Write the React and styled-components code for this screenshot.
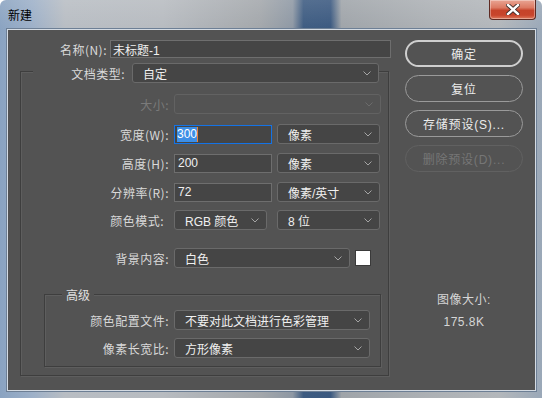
import React from 'react';
import styled, { createGlobalStyle } from 'styled-components';

const GlobalStyle = createGlobalStyle`
  html, body {
    margin: 0;
    padding: 0;
    width: 542px;
    height: 398px;
    overflow: hidden;
  }
  body {
    font-family: "Liberation Sans", "Noto Sans CJK SC", sans-serif;
    font-size: 12px;
  }
`;

const Frame = styled.div`
  width: 542px;
  height: 398px;
  box-sizing: border-box;
  display: flex;
  flex-direction: column;
  padding: 0 6px 7px 7px;
  background:
    linear-gradient(180deg, rgba(255,255,255,0.12) 0%, rgba(255,255,255,0) 30px),
    linear-gradient(90deg, #8aa3c1 0%, #9db0c8 6%, #b8bdc3 12%, #b7bbc0 30%, #a3a7ab 48%, #8e98a4 54%, #3d5b81 56%, #3b5980 61%, #9fa4a9 63%, #adb1b5 80%, #b3b7bb 92%, #9aa8b8 100%);
  border-radius: 6px 6px 0 0;
`;

const TitleBar = styled.div`
  height: 29px;
  display: flex;
  justify-content: space-between;
  align-items: flex-start;
  flex-shrink: 0;
`;

const Title = styled.div`
  margin-top: 8px;
  margin-left: 1px;
  color: #000;
  font-family: "Noto Sans CJK SC", sans-serif;
  font-size: 12px;
  line-height: 14px;
`;

const CloseButton = styled.div`
  width: 47px;
  height: 20px;
  margin-right: 0;
  box-sizing: border-box;
  border: 1px solid #5e2a22;
  border-top: none;
  border-radius: 0 0 4px 4px;
  background: linear-gradient(180deg, #e9a493 0%, #dc7a63 40%, #c6432a 55%, #c8452c 80%, #de7a5e 100%);
  box-shadow: inset 0 0 0 1px rgba(255,255,255,0.35);
  display: flex;
  align-items: center;
  justify-content: center;
`;

const Client = styled.div`
  flex: 1;
  display: flex;
  background: #535353;
  border: 1px solid #d4dbe3;
  box-shadow: 0 0 0 1px #6d7f95;
`;

const LeftPanel = styled.div`
  width: 388px;
  display: flex;
  flex-direction: column;
`;

const RightPanel = styled.div`
  width: 118px;
  margin-left: 9px;
  padding-top: 10px;
  display: flex;
  flex-direction: column;
  gap: 8px;
`;

const Row = styled.div`
  display: flex;
  align-items: center;
  gap: ${p => p.$gap ?? 5}px;
  margin-top: ${p => p.$top ?? 0}px;
  height: 20px;
`;

const Label = styled.div`
  width: ${p => p.$w}px;
  flex-shrink: 0;
  text-align: right;
  color: ${p => (p.$disabled ? '#7a7a7a' : '#d9d9d9')};
  font-family: "Noto Sans CJK SC", sans-serif;
  font-size: 12px;
  white-space: nowrap;
  letter-spacing: 0.5px;
`;

const Input = styled.div`
  width: ${p => p.$w}px;
  height: ${p => p.$h ?? 19}px;
  box-sizing: border-box;
  background: #454545;
  border: 1px solid ${p => (p.$focus ? '#1473e6' : '#6e6e6e')};
  color: #f0f0f0;
  padding-left: ${p => p.$pad ?? 2}px;
  display: flex;
  align-items: center;
  font-size: 12px;
  font-family: "Liberation Sans", "Noto Sans CJK SC", sans-serif;
  white-space: nowrap;
`;

const Selected = styled.span`
  background: #3d8fe6;
  color: #fff;
  line-height: 15px;
`;

const Caret = styled.span`
  width: 1px;
  height: 15px;
  background: #e8843a;
`;

const Select = styled.div`
  width: ${p => p.$w}px;
  height: 20px;
  box-sizing: border-box;
  border-radius: 3px;
  background: ${p => (p.$disabled ? '#535353' : '#454545')};
  border: 1px solid ${p => (p.$disabled ? '#626262' : '#6a6a6a')};
  color: #f0f0f0;
  padding: 0 7px 0 ${p => p.$pad ?? 10}px;
  display: flex;
  align-items: center;
  justify-content: space-between;
  font-family: "Liberation Sans", "Noto Sans CJK SC", sans-serif;
  font-size: 12px;
  white-space: nowrap;
`;

const Group = styled.div`
  margin-left: 12px;
  margin-top: 12px;
  width: 369px;
  box-sizing: border-box;
  border: 1px solid #3e3e3e;
  box-shadow: 1px 1px 0 #5e5e5e inset, 1px 1px 0 #5e5e5e;
  display: flex;
  flex-direction: column;
  padding-bottom: 8px;
`;

const LegendRow = styled(Row)`
  margin-top: -9px;
  margin-left: 12px;
  width: 346px;
  background: #535353;
`;

const SubGroup = styled.div`
  margin-left: 23px;
  margin-top: 26px;
  width: 337px;
  box-sizing: border-box;
  border: 1px solid #3e3e3e;
  box-shadow: 1px 1px 0 #5e5e5e inset, 1px 1px 0 #5e5e5e;
  padding-bottom: 8px;
  display: flex;
  flex-direction: column;
`;

const SubLegend = styled.div`
  margin: -8px 0 0 17px;
  padding: 0 4px;
  width: fit-content;
  background: #535353;
  color: #e0e0e0;
  font-family: "Noto Sans CJK SC", sans-serif;
  font-size: 12px;
  line-height: 16px;
`;

const Swatch = styled.div`
  width: 16px;
  height: 16px;
  box-sizing: border-box;
  background: #fff;
  border: 1px solid #3a3a3a;
`;

const Button = styled.div`
  height: 27px;
  box-sizing: border-box;
  border-radius: 14px;
  border: ${p => (p.$primary ? '2px solid #cfcfcf' : `1px solid ${p.$disabled ? '#616161' : '#9a9a9a'}`)};
  color: ${p => (p.$disabled ? '#767676' : '#ececec')};
  display: flex;
  align-items: center;
  justify-content: center;
  font-family: "Liberation Sans", "Noto Sans CJK SC", sans-serif;
  font-size: 12px;
  letter-spacing: 0.8px;
`;

const SizeInfo = styled.div`
  margin-top: 110px;
  display: flex;
  flex-direction: column;
  align-items: center;
  gap: 8px;
  color: #d6d6d6;
  font-family: "Liberation Sans", "Noto Sans CJK SC", sans-serif;
  font-size: 12px;
  letter-spacing: 0.5px;
`;

const Chevron = ({ dim }) => (
  <svg width="8" height="5" viewBox="0 0 8 5">
    <polyline points="0.5,0.5 4,4 7.5,0.5" fill="none" stroke={dim ? '#6e6e6e' : '#b0b0b0'} strokeWidth="0.9" />
  </svg>
);

const CloseGlyph = () => (
  <svg width="14" height="11" viewBox="0 0 14 11">
    <path d="M2 1 L12 10 M12 1 L2 10" stroke="#3a2a28" strokeWidth="4.2" strokeLinecap="square" />
    <path d="M2 1 L12 10 M12 1 L2 10" stroke="#fff" strokeWidth="2.4" strokeLinecap="square" />
  </svg>
);

const Dropdown = ({ w, children, pad, disabled }) => (
  <Select $w={w} $pad={pad} $disabled={disabled}>
    <span>{children}</span>
    <Chevron dim={disabled} />
  </Select>
);

export default function App() {
  return (
    <>
      <GlobalStyle />
      <Frame>
        <TitleBar>
          <Title>新建</Title>
          <CloseButton><CloseGlyph /></CloseButton>
        </TitleBar>
        <Client>
          <LeftPanel>
            <Row $top={9} $gap={3}>
              <Label $w={99}>名称(N):</Label>
              <Input $w={281} $h={18}>未标题-1</Input>
            </Row>
            <Group>
              <LegendRow $gap={7}>
                <Label $w={92}>文档类型:</Label>
                <Dropdown w={247} pad={10}>自定</Dropdown>
              </LegendRow>
              <Row $top={11}>
                <Label $w={148} $disabled>大小:</Label>
                <Dropdown w={207} disabled></Dropdown>
              </Row>
              <Row $top={10}>
                <Label $w={148}>宽度(W):</Label>
                <Input $w={98} $focus $pad={2}><Selected>300</Selected><Caret /></Input>
                <Dropdown w={103}>像素</Dropdown>
              </Row>
              <Row $top={9}>
                <Label $w={148}>高度(H):</Label>
                <Input $w={98} $pad={3}>200</Input>
                <Dropdown w={103}>像素</Dropdown>
              </Row>
              <Row $top={9}>
                <Label $w={148}>分辨率(R):</Label>
                <Input $w={98} $pad={3}>72</Input>
                <Dropdown w={103}>像素/英寸</Dropdown>
              </Row>
              <Row $top={8} $gap={10}>
                <Label $w={143}>颜色模式:</Label>
                <Dropdown w={93}>RGB 颜色</Dropdown>
                <Dropdown w={103}>8 位</Dropdown>
              </Row>
              <Row $top={18}>
                <Label $w={148}>背景内容:</Label>
                <Dropdown w={176}>白色</Dropdown>
                <Swatch />
              </Row>
              <SubGroup>
                <SubLegend>高级</SubLegend>
                <Row $top={7}>
                  <Label $w={124}>颜色配置文件:</Label>
                  <Dropdown w={196}>不要对此文档进行色彩管理</Dropdown>
                </Row>
                <Row $top={8}>
                  <Label $w={124}>像素长宽比:</Label>
                  <Dropdown w={196}>方形像素</Dropdown>
                </Row>
              </SubGroup>
            </Group>
          </LeftPanel>
          <RightPanel>
            <Button $primary>确定</Button>
            <Button>复位</Button>
            <Button>存储预设(S)...</Button>
            <Button $disabled>删除预设(D)...</Button>
            <SizeInfo>
              <span>图像大小:</span>
              <span>175.8K</span>
            </SizeInfo>
          </RightPanel>
        </Client>
      </Frame>
    </>
  );
}
